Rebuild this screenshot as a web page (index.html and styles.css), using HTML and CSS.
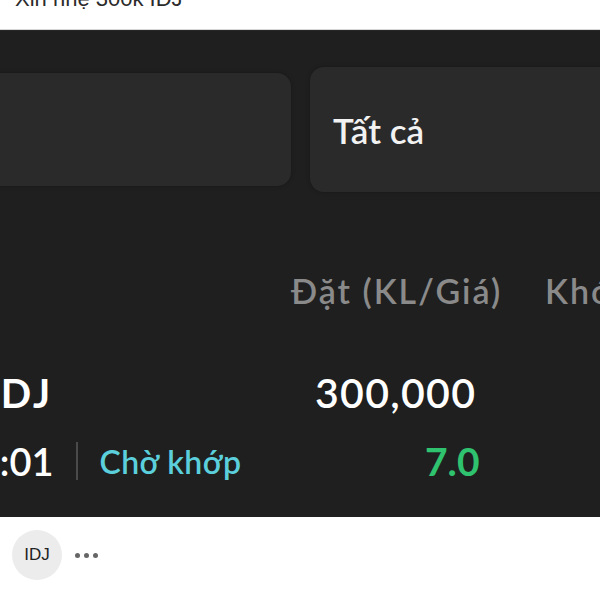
FILE: index.html
```html
<!DOCTYPE html>
<html lang="vi">

<head>
  <meta charset="UTF-8">
  <meta name="viewport" content="width=device-width, initial-scale=1.0">
  <title>Xin nhẹ 300k IDJ</title>
  <link rel="stylesheet" href="styles.css">
</head>

<body>
  <div class="post-title">
    <p>Xin nhẹ 300k IDJ</p>
  </div>

  <div class="shot">
    <div class="filters">
      <div class="filter filter-left"></div>
      <div class="filter filter-right">Tất cả</div>
    </div>

    <div class="order-head">
      <span class="col-name"></span>
      <span class="col-order">Đặt (KL/Giá)</span>
      <span class="col-match">Khớp</span>
    </div>

    <div class="order-row">
      <span class="col-name symbol">IDJ</span>
      <span class="col-order qty">300,000</span>
    </div>

    <div class="order-row order-sub">
      <span class="col-name time">
        <span class="clock">10:19:01</span>
        <span class="divider"></span>
        <span class="status">Chờ khớp</span>
      </span>
      <span class="col-order price">7.0</span>
    </div>
  </div>

  <div class="post-foot">
    <span class="tag">IDJ</span>
    <span class="more"><i></i><i></i><i></i></span>
  </div>
</body>

</html>
```

FILE: styles.css
```css
body {
  margin: 0;
  background-color: #fff;
  font-family: "Liberation Sans", Arial, sans-serif;
  width: 600px;
  height: 600px;
  overflow: hidden;
}

.post-title {
  height: 29px;
  border-bottom: 1px solid #d6d6d6;
  overflow: hidden;
}

.post-title p {
  margin: -15px 0 0 15px;
  font-size: 22px;
  line-height: 28px;
  color: #2b2b2b;
}

/* the dark app screenshot */
.shot {
  height: 486px;
  background-color: #1f1f1f;
  font-family: Lato, "Noto Sans", sans-serif;
  color: #fff;
  overflow: hidden;
  border-top: 1px solid #262626;
}

.filters {
  display: flex;
  align-items: center;
  gap: 19px;
  margin-top: 36px;
  margin-left: -40px;
}

.filter {
  flex-shrink: 0;
  background-color: #2a2a2a;
  border-radius: 14px;
  box-shadow: 0 0 4px rgba(0, 0, 0, 0.25);
}

.filter-left {
  width: 331px;
  height: 113px;
}

.filter-right {
  width: 307px;
  height: 125px;
  display: flex;
  align-items: center;
  padding-left: 23px;
  font-size: 35px;
  font-weight: 600;
  color: #f2f2f2;
}

.order-head,
.order-row {
  display: grid;
  grid-template-columns: 291px 210px 100px;
  align-items: center;
}

.order-head {
  margin-top: 78px;
  font-size: 34px;
  font-weight: 600;
  letter-spacing: 2px;
  color: #8a8a8a;
}

.col-match {
  padding-left: 44px;
  white-space: nowrap;
}

.order-row {
  margin-top: 57px;
}

.col-order {
  white-space: nowrap;
}

.symbol {
  font-size: 40px;
  font-weight: 700;
  letter-spacing: 3px;
  margin-left: -14px;
}

.qty {
  font-size: 41px;
  font-weight: 600;
  letter-spacing: 1.3px;
  padding-left: 24px;
}

.order-sub {
  margin-top: 21px;
}

.time {
  display: flex;
  align-items: center;
  gap: 22px;
  margin-left: -98px;
  font-size: 38px;
  font-weight: 600;
}

.divider {
  width: 2px;
  height: 38px;
  background-color: #4a4a4a;
}

.status {
  font-size: 32px;
  font-weight: 600;
  letter-spacing: 0.4px;
  color: #5ccfdc;
}

.price {
  font-size: 39px;
  font-weight: 700;
  color: #2fc26f;
  padding-left: 134px;
}

.post-foot {
  display: flex;
  align-items: center;
  gap: 13px;
  padding: 13px 12px;
}

.tag {
  width: 50px;
  height: 50px;
  border-radius: 50%;
  background-color: #ececec;
  display: flex;
  align-items: center;
  justify-content: center;
  font-size: 17px;
  color: #222;
}

.more {
  display: flex;
  gap: 4px;
}

.more i {
  width: 5px;
  height: 5px;
  border-radius: 50%;
  background-color: #666;
}
```
